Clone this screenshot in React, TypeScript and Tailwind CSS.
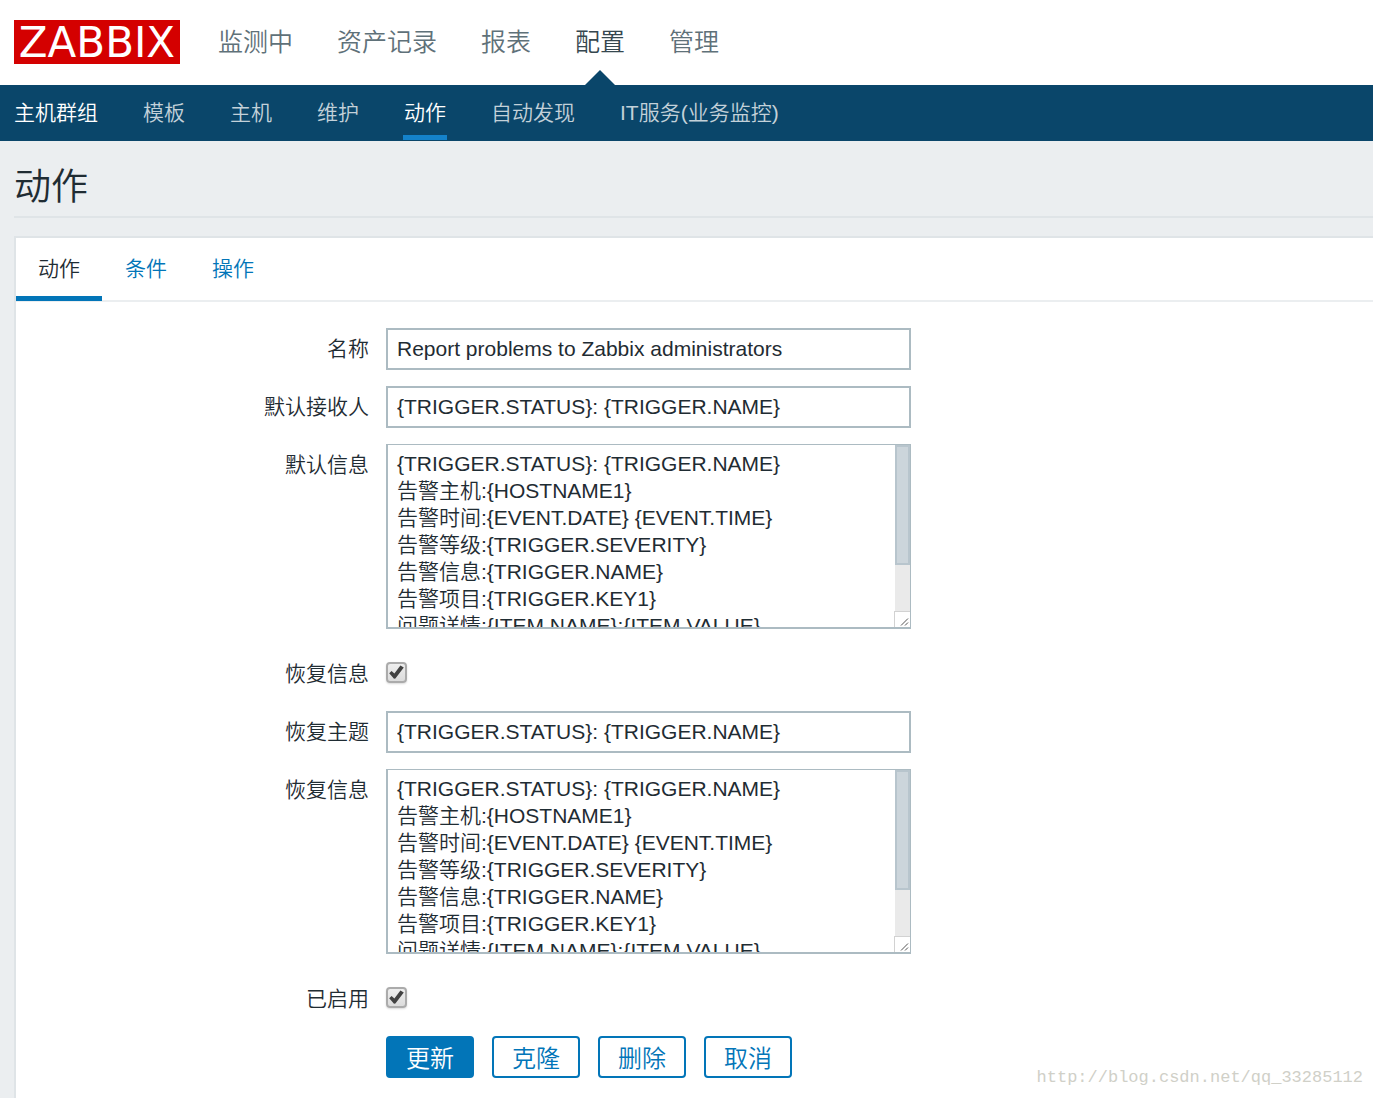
import { useState } from 'react';
import type { ReactNode } from 'react';

type MenuItem = { href: string; label: string };

const MAIN_MENU: MenuItem[] = [
  { href: '#monitoring', label: '监测中' },
  { href: '#inventory', label: '资产记录' },
  { href: '#reports', label: '报表' },
  { href: '#configuration', label: '配置' },
  { href: '#administration', label: '管理' },
];

const SUB_MENU: MenuItem[] = [
  { href: '#hostgroups', label: '主机群组' },
  { href: '#templates', label: '模板' },
  { href: '#hosts', label: '主机' },
  { href: '#maintenance', label: '维护' },
  { href: '#actions', label: '动作' },
  { href: '#discovery', label: '自动发现' },
  { href: '#services', label: 'IT服务(业务监控)' },
];

const TABS = ['动作', '条件', '操作'];

const SUBJECT = '{TRIGGER.STATUS}: {TRIGGER.NAME}';

const MESSAGE = [
  '{TRIGGER.STATUS}: {TRIGGER.NAME}',
  '告警主机:{HOSTNAME1}',
  '告警时间:{EVENT.DATE} {EVENT.TIME}',
  '告警等级:{TRIGGER.SEVERITY}',
  '告警信息:{TRIGGER.NAME}',
  '告警项目:{TRIGGER.KEY1}',
  '问题详情:{ITEM.NAME}:{ITEM.VALUE}',
  '',
  '',
].join('\n');

function Row({ id, label, children }: { id: string; label: string; children: ReactNode }) {
  return (
    <div className="grid grid-cols-[353px_minmax(0,1fr)] gap-x-[17px]">
      <label htmlFor={id} className="text-right leading-[42px]">
        {label}
      </label>
      {children}
    </div>
  );
}

function TextField({ id, label, value }: { id: string; label: string; value: string }) {
  return (
    <Row id={id} label={label}>
      <input
        id={id}
        type="text"
        defaultValue={value}
        className="h-[42px] w-full max-w-[525px] border-2 border-[#acbbc2] bg-white px-[9px] outline-none focus:border-[#0275b8]"
      />
    </Row>
  );
}

function TextArea({ id, label, value }: { id: string; label: string; value: string }) {
  return (
    <Row id={id} label={label}>
      <div className="relative mb-2 h-[185px] w-full max-w-[525px]">
        <textarea
          id={id}
          defaultValue={value}
          className="block h-full w-full resize-none border-2 border-t border-[#acbbc2] bg-white py-[5px] pr-6 pl-[9px] leading-[27px] outline-none [scrollbar-width:none] focus:border-[#0275b8]"
        />
        {/* scrollbar */}
        <div className="pointer-events-none absolute top-px right-px bottom-[2px] flex w-[15px] flex-col bg-[#eaeaea]">
          <div className="h-[120px] border-2 border-[#b8c5cd] bg-[#ccd5db]" />
          <div className="mt-auto -ml-px h-4 border-t border-l border-[#d2d2d2] bg-white">
            <svg viewBox="0 0 15 15" className="size-[15px]" stroke="#555" strokeWidth="1" fill="none">
              <path d="M6 13.5 13 6.5M10 13.5 13 10.5" />
            </svg>
          </div>
        </div>
      </div>
    </Row>
  );
}

function CheckField({ id, label }: { id: string; label: string }) {
  return (
    <Row id={id} label={label}>
      <div className="flex h-[42px] items-center pb-[3px]">
        <span className="relative flex">
          <input
            id={id}
            type="checkbox"
            defaultChecked
            className="peer size-[21px] appearance-none rounded-[4px] border-2 border-[#ababab] bg-linear-to-b from-[#eeeeee] to-[#dcdcdc] shadow-[0_1px_2px_rgba(0,0,0,0.15)]"
          />
          <svg
            viewBox="0 0 21 21"
            className="pointer-events-none absolute inset-0 hidden size-[21px] peer-checked:block"
            fill="#424242"
          >
            <path d="M3.2 11.2 5.6 9 8.4 11.4 14.4 3.6 17.8 5.4 9.4 16.6 8 16.8Z" />
          </svg>
        </span>
      </div>
    </Row>
  );
}

export default function App() {
  const [tab, setTab] = useState(0);

  return (
    <div className="relative flex min-h-screen flex-col bg-[#ebeef0] font-['Liberation_Sans','Noto_Sans_CJK_SC',sans-serif] text-[21px] font-[350] text-[#1f2c33]">
      <header>
        <div className="flex h-[85px] items-center bg-white pl-[14px]">
          <a
            href="#dashboard"
            className="mb-px flex h-11 w-[166px] items-center justify-center bg-[#d40000] pt-[2px] font-['DejaVu_Sans',sans-serif] text-[42px] leading-none font-normal text-white"
          >
            ZABBIX
          </a>
          <nav className="ml-[38px] flex gap-11 self-stretch text-[25px]" aria-label="主菜单">
            {MAIN_MENU.map((item) => {
              const active = item.label === '配置';
              return (
                <a
                  key={item.href}
                  href={item.href}
                  className={`relative flex items-center ${active ? 'text-[#36474f]' : 'text-[#5f7179]'}`}
                >
                  {item.label}
                  {active && (
                    <span className="absolute bottom-0 left-1/2 -translate-x-1/2 border-x-[15px] border-b-[15px] border-x-transparent border-b-[#0a466a]" />
                  )}
                </a>
              );
            })}
          </nav>
        </div>
        <nav className="flex h-14 gap-[43px] bg-[#0a466a] pl-[13px]" aria-label="子菜单">
          {SUB_MENU.map((item) => {
            const active = item.label === '动作';
            return (
              <a
                key={item.href}
                href={item.href}
                className={[
                  'mb-px flex items-center border-b-[5px] px-px pt-[5px]',
                  active ? 'border-[#1482ca]' : 'border-transparent',
                  active || item.label === '主机群组' ? 'text-white' : 'text-[#c3d1d9]',
                ].join(' ')}
              >
                {item.label}
              </a>
            );
          })}
        </nav>
      </header>

      <main className="flex flex-1 flex-col pl-[14px]">
        <h1 className="mb-[18px] border-b-2 border-[#dfe4e7] pt-[19px] text-[37px] leading-[56px]">动作</h1>

        <div className="flex-1 border-t-2 border-l-2 border-[#dfe4e7] bg-white pb-5">
          <div className="flex h-16 gap-px border-b-2 border-[#ebeef0]" role="tablist">
            {TABS.map((name, i) => (
              <button
                key={name}
                type="button"
                role="tab"
                aria-selected={i === tab}
                onClick={() => setTab(i)}
                className={[
                  'h-[63px] border-b-[5px] px-[22px] pt-[3px]',
                  i === tab ? 'border-[#0275b8]' : 'border-transparent text-[#0275b8]',
                ].join(' ')}
              >
                {name}
              </button>
            ))}
          </div>

          <form className="mt-[26px] flex flex-col gap-4" onSubmit={(e) => e.preventDefault()}>
            <TextField id="name" label="名称" value="Report problems to Zabbix administrators" />
            <TextField id="def_shortdata" label="默认接收人" value={SUBJECT} />
            <TextArea id="def_longdata" label="默认信息" value={MESSAGE} />
            <CheckField id="recovery_msg" label="恢复信息" />
            <TextField id="r_shortdata" label="恢复主题" value={SUBJECT} />
            <TextArea id="r_longdata" label="恢复信息" value={MESSAGE} />
            <CheckField id="status" label="已启用" />

            <div className="ml-[370px] flex gap-[18px] text-[24px]">
              <button
                type="submit"
                className="h-[42px] rounded-[4px] border-2 border-[#0275b8] bg-[#0275b8] px-[18px] pt-[3px] leading-none text-white"
              >
                更新
              </button>
              {['克隆', '删除', '取消'].map((name) => (
                <button
                  key={name}
                  type="button"
                  className="h-[42px] rounded-[4px] border-2 border-[#0275b8] bg-white px-[18px] pt-[3px] leading-none text-[#0275b8]"
                >
                  {name}
                </button>
              ))}
            </div>
          </form>
        </div>
      </main>

      <span className="absolute right-[10px] bottom-2 font-['Liberation_Mono',monospace] text-[17px] leading-6 text-[#d0d0c8]">
        http://blog.csdn.net/qq_33285112
      </span>
    </div>
  );
}
